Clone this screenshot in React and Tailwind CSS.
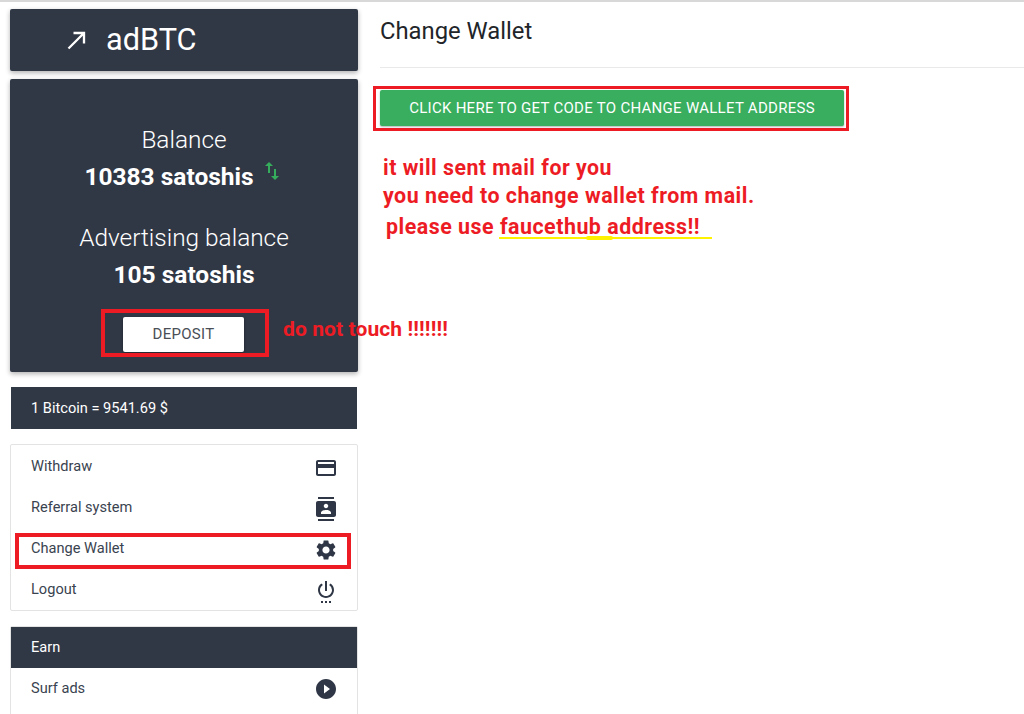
import React from 'react';
import { MdCallMade, MdCreditCard, MdContacts, MdSettings, MdSettingsPower, MdPlayCircleFilled, MdSwapVert } from 'react-icons/md';

const MenuRow = ({ label, icon: Icon, labelTop = 'top-[-1px]' }) => (
    <div className="flex h-[41px] items-center justify-between pl-5 pr-[19px]">
        <span className={`relative ${labelTop} text-[14.6px] text-[#3a4350]`}>{label}</span>
        <Icon className="text-[24px] text-[#2f3645]" />
    </div>
);

const App = () => {
    return (
        <div className="relative h-[714px] w-[1024px] overflow-hidden bg-white font-['Roboto',sans-serif]">
            <div className="h-[2px] bg-[#d8d8d8]" />
            <div className="flex">
                <aside className="ml-[10px] flex w-[348px] shrink-0 flex-col pt-[7px]">
                    <div className="flex h-[62px] items-center rounded-[2px] bg-[#313845] pl-[53px] text-white shadow-[0_2px_5px_rgba(0,0,0,0.3)]">
                        <MdCallMade className="text-[28px]" />
                        <span className="ml-[15px] text-[30.7px] leading-none">adBTC</span>
                    </div>

                    <div className="mt-2 flex h-[293px] flex-col items-center rounded-[2px] bg-[#313845] pt-[46px] text-white shadow-[0_2px_5px_rgba(0,0,0,0.3)]">
                        <div className="text-[24.4px] font-light leading-[30px]">Balance</div>
                        <div className="mt-[7px] flex items-start text-[24.5px] font-bold leading-[30px]">
                            <span>10383 satoshis</span>
                            <MdSwapVert className="ml-[6px] mt-[-3px] text-[24px] text-[#35ad5d]" />
                        </div>
                        <div className="mt-[31px] text-[24.4px] font-light leading-[30px]">Advertising balance</div>
                        <div className="mt-[7px] text-[24.5px] font-bold leading-[30px]">105 satoshis</div>
                        <button className="mr-px mt-[27px] h-[35px] w-[121px] rounded-[2px] bg-white text-[15px] uppercase tracking-[0.28px] text-[#4a4f57] shadow-[0_1px_3px_rgba(0,0,0,0.4)]">
                            Deposit
                        </button>
                    </div>

                    <div className="mx-px mt-[15px] flex h-[42px] items-center bg-[#313845] pl-5 pt-px text-[14.6px] text-white">
                        1 Bitcoin = 9541.69 $
                    </div>

                    <div className="mt-[15px] h-[167px] rounded-[2px] border border-[#e3e3e3] pt-[2px]">
                        <MenuRow label="Withdraw" icon={MdCreditCard} />
                        <MenuRow label="Referral system" icon={MdContacts} />
                        <MenuRow label="Change Wallet" icon={MdSettings} />
                        <MenuRow label="Logout" icon={MdSettingsPower} />
                    </div>

                    <div className="mt-[15px] h-[120px] rounded-[2px] border border-[#e3e3e3]">
                        <div className="flex h-[41px] items-center bg-[#313845] pl-5 text-[14.6px] text-white">Earn</div>
                        <MenuRow label="Surf ads" icon={MdPlayCircleFilled} labelTop="top-0" />
                    </div>
                </aside>

                <main className="ml-[22px] flex-1">
                    <h1 className="mt-[14px] text-[23.8px] leading-[30px] text-[#212529]">Change Wallet</h1>
                    <div className="mt-[21px] h-px bg-[#e9e9e9]" />
                    <button className="mt-[22px] h-[36px] w-[464px] rounded-[2px] bg-[#38ae5e] text-[15px] uppercase tracking-[0.28px] text-white shadow-[0_1px_2px_rgba(0,0,0,0.3)]">
                        Click here to get code to change wallet address
                    </button>
                </main>
            </div>

            {/* red marker annotations drawn over the page */}
            <div className="absolute left-[373px] top-[86px] h-[45px] w-[476px] border-[3px] border-[#ed1c24]" />
            <div className="absolute left-[101px] top-[309px] h-[48px] w-[168px] border-[4px] border-[#ed1c24]" />
            <div className="absolute left-[15px] top-[533px] h-[36px] w-[336px] border-[4px] border-[#ed1c24]" />

            <div className="absolute left-[283px] top-[316px] text-[21px] font-bold leading-[26px] tracking-[0.1px] text-[#ed1c24]">do not touch !!!!!!!</div>
            <div className="absolute left-[383px] top-[155px] text-[21.3px] font-bold leading-[26px] tracking-[0.5px] text-[#ed1c24]">it will sent mail for you</div>
            <div className="absolute left-[383px] top-[183px] text-[21.4px] font-bold leading-[26px] tracking-[0.5px] text-[#ed1c24]">you need to change wallet from mail.</div>
            <div className="absolute left-[386px] top-[214px] text-[21.4px] font-bold leading-[26px] tracking-[0.5px] text-[#ed1c24]">please use faucethub address!!</div>
            <div className="absolute left-[499px] top-[237px] h-[2px] w-[213px] bg-[#fff200]" />
            <div className="absolute left-[586px] top-[236px] h-[4px] w-[27px] rounded-full bg-[#fff200]" />
        </div>
    );
};

export default App;
